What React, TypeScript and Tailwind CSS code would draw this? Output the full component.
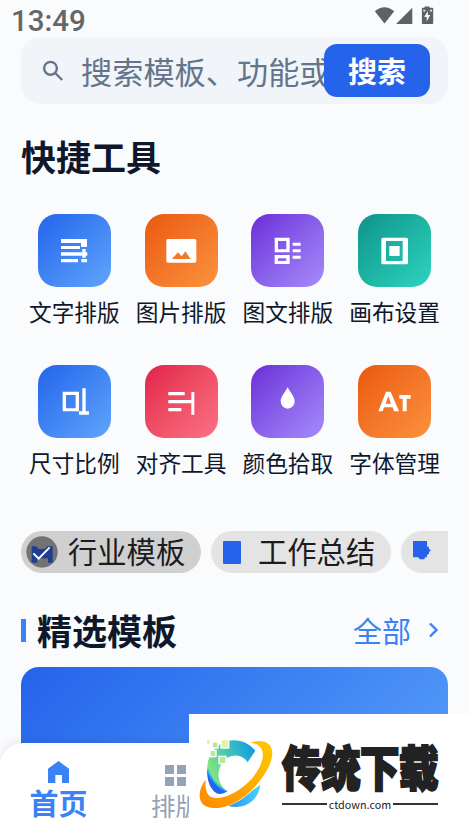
import React from 'react';

const FONT = "font-['Noto_Sans_CJK_SC','Noto_Sans',sans-serif]";

type Tool = { label: string; gradient: string; viewBox: string; icon: React.ReactNode };

const tools: Tool[] = [
  {
    label: '文字排版',
    gradient: 'from-[#2563eb] to-[#60a5fa]',
    viewBox: '54 27 219 219',
    icon: (
      <path d="M123 102h78v24h-18v-12h-60zM123 123h57v9h-57zM123 142h64v-10h10v10h5v10h-5v6h-10v-6h-64zM123 162h51v10h-51zM184 162h17v10h-17z" />
    ),
  },
  {
    label: '图片排版',
    gradient: 'from-[#ea580c] to-[#fb923c]',
    viewBox: '374 27 219 219',
    icon: (
      <path fillRule="evenodd" d="M443 102h80q5 0 5 5v61q0 5-5 5h-80q-5 0-5-5v-61q0-5 5-5zM455 162h56l-16-23-11 15-11-12z" />
    ),
  },
  {
    label: '图文排版',
    gradient: 'from-[#6d28d9] to-[#a78bfa]',
    viewBox: '49 27 219 219',
    icon: (
      <path fillRule="evenodd" d="M120 98h45v44h-45zM130 108v25h25v-25zM120 150h45v27h-45zM130 160v8h25v-8zM174 113h24v9h-24zM174 133h24v9h-24zM174 152h24v9h-24z" />
    ),
  },
  {
    label: '画布设置',
    gradient: 'from-[#0d9488] to-[#2dd4bf]',
    viewBox: '370 27 219 219',
    icon: (
      <path fillRule="evenodd" d="M445 98h70q5 0 5 5v70q0 5-5 5h-70q-5 0-5-5v-70q0-5 5-5zM454 108v60h50v-60zM464 123h31v30h-31z" />
    ),
  },
  {
    label: '尺寸比例',
    gradient: 'from-[#2563eb] to-[#60a5fa]',
    viewBox: '54 29 219 219',
    icon: (
      <path fillRule="evenodd" d="M128 109h49v59h-49zM138 119v40h29v-40zM187 99h10v69h10v10h-30v-10h10z" />
    ),
  },
  {
    label: '对齐工具',
    gradient: 'from-[#e11d48] to-[#fb7185]',
    viewBox: '374 29 219 219',
    icon: <path d="M444 110h49v10h-49zM444 134h69v-24h9v68h-9v-34h-69zM444 158h39v10h-39z" />,
  },
  {
    label: '颜色拾取',
    gradient: 'from-[#6d28d9] to-[#a78bfa]',
    viewBox: '49 29 219 219',
    icon: <path d="M159 96c-7 14-21 28-21 42a21 22 0 0 0 42 0c0-14-14-28-21-42z" />,
  },
  {
    label: '字体管理',
    gradient: 'from-[#ea580c] to-[#fb923c]',
    viewBox: '370 29 219 219',
    icon: (
      <path fillRule="evenodd" d="M454 109h14l25 59h-15l-4-12h-26l-4 12h-13zM461 122l-8 23h16zM494 119h34v11h-12v38h-12v-38h-10z" />
    ),
  },
];

function StatusBar() {
  return (
    <header className="flex h-[37px] items-start justify-between pl-[11px] pr-[35px]">
      <span className="mt-[4px] font-[Roboto,sans-serif] text-[29.5px] font-medium leading-[34px] text-[#666666]">13:49</span>
      <svg className="mt-[4px] h-[22px] w-[60px]" viewBox="0 0 60 22" fill="#606163">
        <path d="M.8 7.3Q10.5-.6 20.2 7.3L10.5 19.6zM22 20 38.3 3.7V20z" />
        <path fillRule="evenodd" d="M50.5 2.4h5v1.4h2.8q.9 0 .9.9v14.4q0 .9-.9.9H48.800q-.9 0-.9-.9V4.700q0-.9.9-.9h1.700zM53.800 7l-3.600 6h2.500v4.500l3.600-6.400h-2.500z" />
        <path d="M49.300 5.800h2v1.800h-2zM56 5.800h2v1.800h-2z" fill="#e8e9eb" />
      </svg>
    </header>
  );
}

function SearchBar() {
  return (
    <div className="flex h-[67px] items-center rounded-[20px] bg-[#f1f5f9] bg-[#f0f4f9] pl-[21px] pr-[18px]">
      <svg className="h-[22px] w-[22px] shrink-0" viewBox="0 0 22 22" fill="none" stroke="#64748b" strokeWidth="2.4">
        <circle cx="8.500" cy="8.300" r="6.400" />
        <path d="m13.200 13 7 7" />
      </svg>
      <span className="ml-[17px] h-[46px] min-w-0 flex-1 overflow-hidden whitespace-nowrap text-[31.2px] leading-[45px] text-[#64748b]">
        搜索模板、功能或
      </span>
      <button className="-ml-[6px] relative h-[53px] w-[106px] shrink-0 rounded-[13px] bg-[#2563eb] pb-px text-[29px] font-bold leading-[52px] text-white">
        搜索
      </button>
    </div>
  );
}

function TemplateChips() {
  return (
    <div className="mt-[54px] flex h-[42px] gap-[10px] overflow-hidden text-[29.3px] leading-[39px] text-[#1c1c1c]">
      <div className="flex w-[180px] shrink-0 items-center rounded-full bg-[#d0d0d0] pl-[5px]">
        <svg className="h-[32px] w-[32px] shrink-0" viewBox="0 0 96 96">
          <circle cx="48" cy="48" r="47" fill="#737373" />
          <path d="M17 31h14l8 8h17l8-8h16v49H66V67H34v13H17z" fill="#1e3f8f" />
          <path d="m22 52 16 16 33-34" fill="none" stroke="#fff" strokeWidth="6" />
        </svg>
        <span className="ml-[10px] h-[42px] whitespace-nowrap">行业模板</span>
      </div>
      <div className="flex w-[180px] shrink-0 items-center rounded-full bg-[#e4e4e4] pl-[12px]">
        <span className="h-[23px] w-[18px] shrink-0 rounded-[1px] bg-[#2563eb]" />
        <span className="ml-[17px] h-[42px] whitespace-nowrap">工作总结</span>
      </div>
      <div className="w-[80px] shrink-0 rounded-full bg-[#e4e4e4] pl-[12px] pt-[10px]">
        <svg className="h-[19px] w-[18px]" viewBox="0 0 54 57" fill="#2563eb">
          <path d="M0 0h42v16l6 3v5l6 4-6 5v5l-6 4v7h-6l-2 6H20l-4-6H0z" />
        </svg>
      </div>
    </div>
  );
}

function BottomNav() {
  return (
    <nav className="absolute inset-x-0 bottom-0 flex h-[91px] rounded-t-[23px] bg-white shadow-[0_-2px_10px_rgba(15,23,42,0.08)]">
      <div className="flex w-[117px] flex-col items-center pt-[18px] text-[#3b82f6]">
        <svg className="h-[22px] w-[21px]" viewBox="0 0 63 66" fill="currentColor">
          <path d="M31.500 0 63 23v43H42V42H22v24H0V23z" />
        </svg>
        <span className="text-[29px] font-bold leading-[38px]">首页</span>
      </div>
      <div className="flex w-[117px] flex-col items-center pt-[22px] text-[#94a3b8]">
        <svg className="h-[21px] w-[21px]" viewBox="0 0 21 21" fill="currentColor">
          <path d="M0 0h9v9H0zM12 0h9v9h-9zM0 12h9v9H0zM12 12h9v9h-9z" />
        </svg>
        <span className="mt-[3px] text-[24.500px] leading-[34px]">排版</span>
      </div>
    </nav>
  );
}

function SiteBadge() {
  return (
    <aside className="absolute bottom-0 right-0 flex h-[120px] w-[280px] bg-white pl-[8px] pt-[22px]">
      <svg className="h-[76px] w-[78px] shrink-0" viewBox="36 108 234 228">
        <defs>
          <linearGradient id="ring" x1="0" y1="1" x2="1" y2="0">
            <stop offset="0" stopColor="#ff8a00" />
            <stop offset="1" stopColor="#ffc900" />
          </linearGradient>
          <linearGradient id="arc" x1="0" y1=".6" x2="1" y2=".2">
            <stop offset="0" stopColor="#8be879" />
            <stop offset=".5" stopColor="#42c5b5" />
            <stop offset="1" stopColor="#1299e8" />
          </linearGradient>
          <linearGradient id="tail">
            <stop offset="0" stopColor="#2c8cf0" />
            <stop offset="1" stopColor="#49d5ff" />
          </linearGradient>
        </defs>
        <path d="M211 152c-24-29-67-42-103-21-43 26-55 86-25 127 10 14 28 21 44 16-38-27-32-78-2-99 21-14 49-10 63 12z" fill="url(#arc)" />
        <path d="M67 207c13 32 31 57 60 66-15 13-33 12-43-2-14-17-19-41-17-64z" fill="#2464ee" />
        <path d="M67 215c11 25 29 47 55 59l5-1c-27-13-47-38-58-69z" fill="#27b9ed" />
        <path d="M130 318c43-14 62-41 96-64-5 47-46 76-96 64z" fill="url(#tail)" />
        <path d="M194 129c31-12 62-6 67 22 7 38-36 101-80 136-41 33-89 46-120 31-23-11-23-51 1-79-2 24 2 43 15 51 26 13 73-8 108-39 37-33 56-77 46-101-6-15-17-20-37-21z" fill="url(#ring)" />
        <g stroke="#fff" strokeWidth="4">
          <rect x="108" y="119" width="23" height="25" fill="#e2f2a0" />
          <rect x="82" y="126" width="17" height="18" fill="#b7e899" />
          <rect x="75" y="151" width="18" height="19" fill="#b7ed98" />
          <rect x="102" y="169" width="21" height="22" fill="#b9ec91" />
          <rect x="64" y="118" width="13" height="15" fill="#e6f1a4" />
        </g>
      </svg>
      <div className="ml-[7px] w-[158px] text-[#222222]">
        <div className="flex h-[61px] origin-top scale-y-[1.2] whitespace-nowrap text-[39.500px] font-black leading-[50px] tracking-[-0.500px] [-webkit-text-stroke:1.800px_#222222]">
          传统下载
        </div>
        <div className="flex items-center">
          <span className="h-[2px] w-[45px] bg-[#333333]" />
          <span className="w-[66px] text-center text-[10.800px] leading-[14px]">ctdown.com</span>
          <span className="h-[2px] w-[45px] bg-[#333333]" />
        </div>
      </div>
    </aside>
  );
}

export default function App() {
  return (
    <div className={`relative h-[834px] w-[469px] overflow-hidden bg-[#f8fafc] bg-[#f9fbfd] ${FONT}`}>
      <StatusBar />
      <main className="mx-[21px]">
        <SearchBar />
        <h1 className="mt-[27px] text-[35px] font-bold leading-[50px] text-[#0f172a]">快捷工具</h1>
        <section className="mt-[33px] grid grid-cols-4 gap-y-[39px]">
          {tools.map((tool) => (
            <div key={tool.label} className="flex h-[112px] flex-col items-center">
              <div className={`h-[73px] w-[73px] shrink-0 rounded-[19px] bg-linear-135 ${tool.gradient}`}>
                <svg className="h-full w-full" viewBox={tool.viewBox} fill="#fff">
                  {tool.icon}
                </svg>
              </div>
              <span className="mt-[9px] whitespace-nowrap text-[22.700px] leading-[32px] text-[#0f172a]">{tool.label}</span>
            </div>
          ))}
        </section>
        <TemplateChips />
        <div className="mt-[32px] flex h-[50px] items-center">
          <span className="h-[23px] w-[5px] bg-[#3b82f6]" />
          <h2 className="ml-[11px] text-[35px] font-bold leading-[46px] text-[#0f172a]">精选模板</h2>
          <a className="ml-auto flex items-center text-[29px] leading-[44px] text-[#3b82f6]">
            全部
            <svg className="ml-[18px] mr-[10px] h-[16px] w-[9px]" viewBox="0 0 9 16" fill="none" stroke="currentColor" strokeWidth="2.400">
              <path d="m1 1.500 6.500 6.500L1 14.500" />
            </svg>
          </a>
        </div>
        <div className="mt-[12px] h-[210px] rounded-[18px] bg-linear-135 from-[#2563eb] to-[#60a5fa]" />
      </main>
      <BottomNav />
      <SiteBadge />
    </div>
  );
}
